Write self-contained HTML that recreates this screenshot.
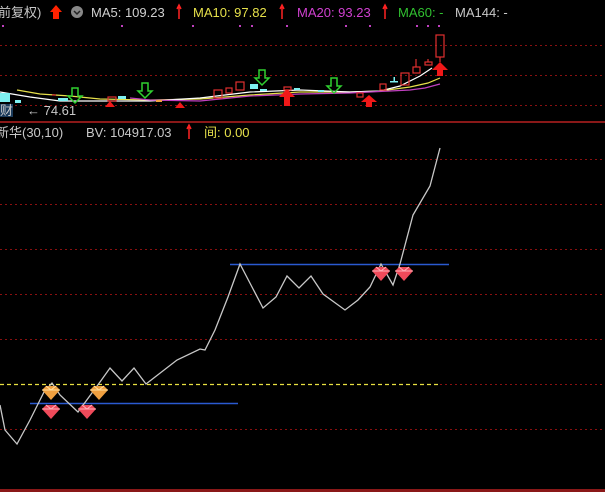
<!DOCTYPE html>
<html><head><meta charset="utf-8"><style>
body{margin:0;background:#000;width:605px;height:492px;overflow:hidden;font-family:"Liberation Sans","Noto Sans CJK SC",sans-serif}
svg{display:block}
text{font-family:"Liberation Sans","Noto Sans CJK SC",sans-serif;font-size:13px}
</style></head><body>
<svg width="605" height="492" viewBox="0 0 605 492">
<rect width="605" height="492" fill="#000"/>
<text x="-2" y="17" fill="#c8c8c8">前复权)</text>
<path d="M56 12 L50 12 L56 5 L62 12 L59 12 L59 19 L53 19 L53 12Z" fill="#f20"/>
<circle cx="77" cy="12" r="6" fill="#888"/>
<path d="M74 11 L77 14 L80 11" stroke="#222" stroke-width="1.5" fill="none"/>
<text x="91" y="17" fill="#d0d0d0">MA5: 109.23</text>
<path d="M179 19 L179 7 M177 9 L179 5 L181 9" stroke="#f22" stroke-width="1.5" fill="none"/>
<text x="193" y="17" fill="#e6e04a">MA10: 97.82</text>
<path d="M282 19 L282 7 M280 9 L282 5 L284 9" stroke="#f22" stroke-width="1.5" fill="none"/>
<text x="297" y="17" fill="#d040d0">MA20: 93.23</text>
<path d="M385 19 L385 7 M383 9 L385 5 L387 9" stroke="#f22" stroke-width="1.5" fill="none"/>
<text x="398" y="17" fill="#30c030">MA60: -</text>
<text x="455" y="17" fill="#c8c8c8">MA144: -</text>
<g fill="#c040c0"><rect x="2" y="25" width="2" height="2"/><rect x="121" y="25" width="2" height="2"/><rect x="192" y="25" width="2" height="2"/><rect x="239" y="25" width="2" height="2"/><rect x="251" y="25" width="2" height="2"/><rect x="286" y="25" width="2" height="2"/><rect x="345" y="25" width="2" height="2"/><rect x="369" y="25" width="2" height="2"/><rect x="416" y="25" width="2" height="2"/><rect x="427" y="25" width="2" height="2"/><rect x="438" y="25" width="2" height="2"/></g>
<g stroke="#8a1010" stroke-dasharray="2,3" stroke-width="1">
<line x1="0" y1="45.5" x2="605" y2="45.5"/><line x1="0" y1="75.5" x2="605" y2="75.5"/><line x1="0" y1="105.5" x2="605" y2="105.5"/>
</g>
<polyline points="17,90 40,94 70,96 100,99 150,100 200,99 250,95 300,92 350,92 380,91 410,87 428,83 440,78" stroke="#e6e04a" fill="none" stroke-width="1.2"/>
<polyline points="0,92 30,97 60,101 100,101 150,101 200,98 250,92 300,90 350,92 380,91 400,86 420,76 432,68" stroke="#fff" fill="none" stroke-width="1.2"/>
<polyline points="130,98 150,100 200,101 250,96 300,94 350,93 390,91 410,90 425,88 440,84" stroke="#c040c0" fill="none" stroke-width="1.2"/>
<g fill="none" stroke="#e03030" stroke-width="1.2">
<rect x="214" y="90" width="8" height="8"/><rect x="226" y="88" width="6" height="5"/><rect x="236" y="82" width="8" height="8"/>
<rect x="284" y="87" width="7" height="3"/><rect x="380" y="84" width="6" height="6"/><rect x="357" y="93" width="6" height="4"/>
<rect x="401" y="73" width="8" height="12"/><rect x="413" y="67" width="7" height="6"/><rect x="425" y="62" width="7" height="3"/>
<rect x="436" y="35" width="8" height="22"/><rect x="108" y="97" width="8" height="4"/>
<line x1="416" y1="59" x2="416" y2="67"/><line x1="428" y1="59" x2="428" y2="62"/><line x1="440" y1="57" x2="440" y2="62"/><line x1="52" y1="95" x2="56" y2="95"/>
</g>
<g fill="#7ef0f0"><rect x="0" y="93" width="10" height="9"/><rect x="15" y="100" width="6" height="3"/><rect x="58" y="98" width="10" height="3"/><rect x="118" y="96" width="8" height="3"/><rect x="250" y="84" width="8" height="5"/><rect x="260" y="89" width="7" height="2"/><rect x="294" y="88" width="6" height="2"/><rect x="318" y="90" width="6" height="2"/><rect x="390" y="81" width="8" height="1.5"/><rect x="393.5" y="77" width="1.5" height="5"/></g>
<rect x="156" y="100" width="6" height="2" fill="#f0a040"/>
<g fill="none" stroke="#30d030" stroke-width="1.5">
<path d="M72 96 L72 88 L78 88 L78 96 L82 96 L75 103 L68 96Z"/>
<path d="M142 91 L142 83 L148 83 L148 91 L152 91 L145 98 L138 91Z"/>
<path d="M259 78 L259 70 L265 70 L265 78 L269 78 L262 85 L255 78Z"/>
<path d="M331 86 L331 78 L337 78 L337 86 L341 86 L334 93 L327 86Z"/>
</g>
<g fill="#f01818">
<path d="M289 106 L284 106 L284 97 L279 97 L287 89 L295 97 L290 97 L290 106Z"/>
<path d="M371 107 L366 107 L366 102 L361 102 L369 95 L377 102 L372 102 L372 107Z"/>
<path d="M442 76 L437 76 L437 70 L432 70 L440 62 L448 70 L443 70 L443 76Z"/>
<path d="M105 107 L110 101 L115 107Z"/><path d="M175 108 L180 102 L185 108Z"/>
</g>
<rect x="0" y="104" width="13" height="13" fill="#1a3a5a"/>
<text x="0" y="115" fill="#c8c8c8">财</text>
<text x="27" y="115" fill="#c8c8c8">← 74.61</text>
<rect x="0" y="121" width="605" height="2" fill="#8a1818"/>
<text x="-4" y="137" fill="#c8c8c8">新华(30,10)</text>
<text x="86" y="137" fill="#c8c8c8">BV: 104917.03</text>
<path d="M189 139 L189 127 M187 129 L189 125 L191 129" stroke="#f22" stroke-width="1.5" fill="none"/>
<text x="204" y="137" fill="#e6e04a">间: 0.00</text>
<g stroke="#8a1010" stroke-dasharray="2,3" stroke-width="1">
<line x1="0" y1="159.5" x2="605" y2="159.5"/><line x1="0" y1="204.5" x2="605" y2="204.5"/><line x1="0" y1="249.5" x2="605" y2="249.5"/>
<line x1="0" y1="294.5" x2="605" y2="294.5"/><line x1="0" y1="339.5" x2="605" y2="339.5"/><line x1="440" y1="384.5" x2="605" y2="384.5"/>
<line x1="0" y1="429.5" x2="605" y2="429.5"/>
</g>
<line x1="0" y1="384.5" x2="440" y2="384.5" stroke="#e8e040" stroke-dasharray="4,3" stroke-width="1.2"/>
<line x1="30" y1="403.5" x2="238" y2="403.5" stroke="#2a5ad0" stroke-width="1.5"/>
<line x1="230" y1="264.5" x2="449" y2="264.5" stroke="#2a5ad0" stroke-width="1.5"/>
<polyline points="0,405 5,430 17,444 30,420 44,392 52,383 60,395 78,412 100,382 110,368 122,381 134,368 146,384 177,360 200,349 205,350 215,330 228,297 240,264 252,287 263,308 276,297 287,276 299,288 311,276 323,294 345,310 358,300 370,287 381,264 393,285 400,264 413,215 430,186 440,148" fill="none" stroke="#c8c8c8" stroke-width="1.3"/>
<defs>
<g id="dr"><path d="M-9 -4 L-5 -8 L5 -8 L9 -4 L0 6Z" fill="#ef4a5a"/><path d="M-9 -4 L9 -4 M-5 -8 L0 -4 L5 -8" stroke="#ffb0b8" stroke-width="1" fill="none"/></g>
<g id="dy"><path d="M-9 -4 L-5 -8 L5 -8 L9 -4 L0 6Z" fill="#f0a040"/><path d="M-9 -4 L9 -4 M-5 -8 L0 -4 L5 -8" stroke="#ffe0a0" stroke-width="1" fill="none"/></g>
</defs>
<use href="#dy" x="51" y="394"/><use href="#dy" x="99" y="394"/>
<use href="#dr" x="51" y="413"/><use href="#dr" x="87" y="413"/>
<use href="#dr" x="381" y="275"/><use href="#dr" x="404" y="275"/>
<rect x="0" y="489" width="605" height="3" fill="#8a1818"/>
</svg>
</body></html>
